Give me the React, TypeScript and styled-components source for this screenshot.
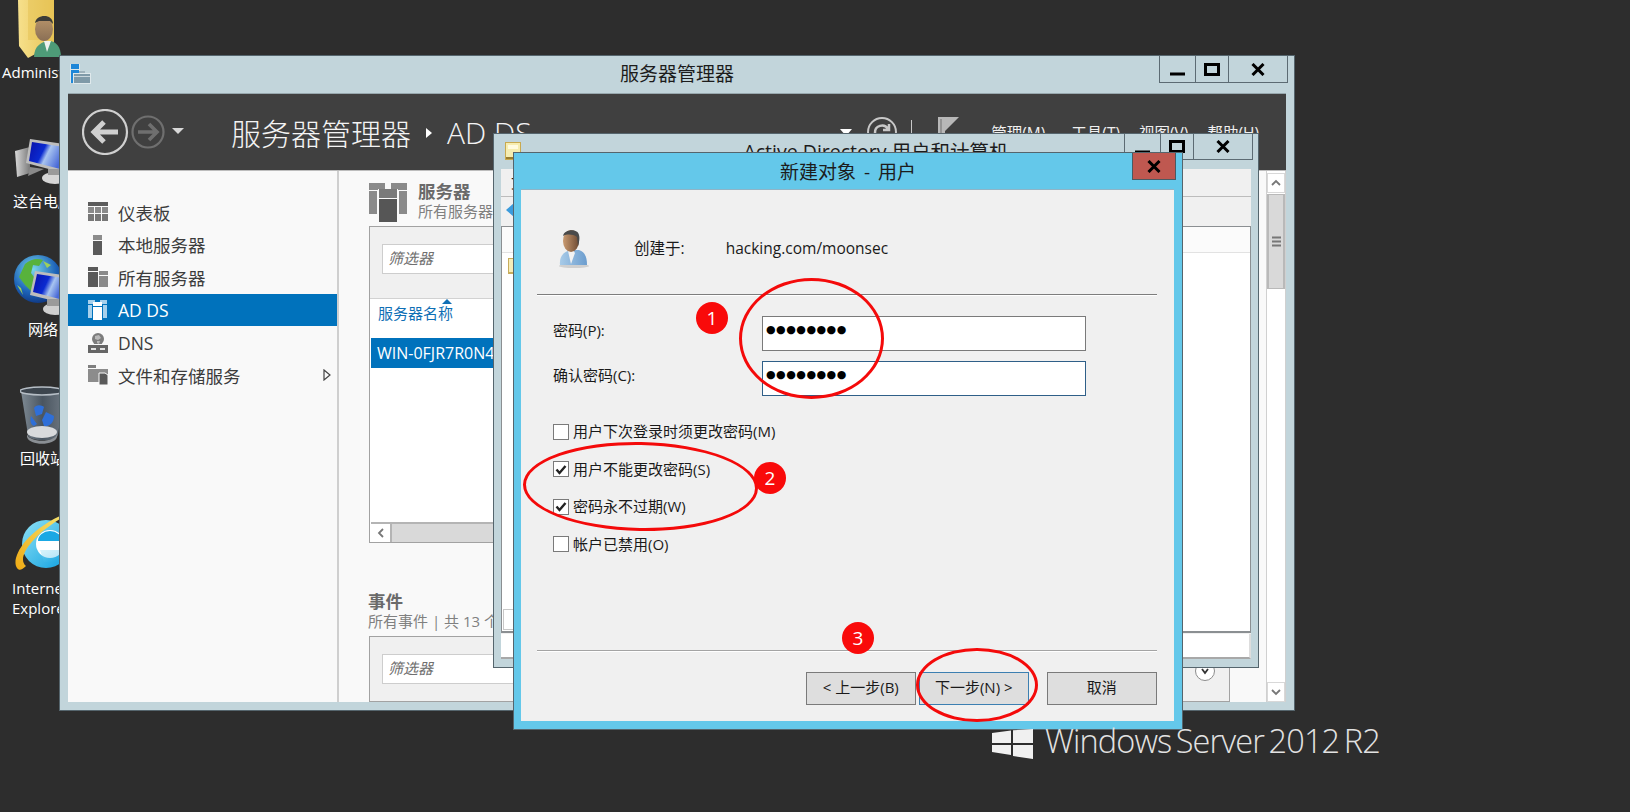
import React from "react";
import styled, { createGlobalStyle } from "styled-components";

const ui = `"Open Sans","Noto Sans CJK SC",sans-serif`;

const Global = createGlobalStyle`
  html, body { margin: 0; padding: 0; background: #2d2d2d; overflow: hidden; }
  * { box-sizing: border-box; }
`;

const Desktop = styled.div`
  position: relative; width: 1630px; height: 812px; background: #2d2d2d; overflow: hidden; font-family: ${ui};
`;

/* desktop icons */
const DesktopItem = styled.div<{ $x: number; $y: number }>`
  position: absolute; left: ${p => p.$x}px; top: ${p => p.$y}px;
`;
const DeskLabel = styled.div<{ $x: number; $y: number }>`
  position: absolute; left: ${p => p.$x}px; top: ${p => p.$y}px;
  color: #fff; font-size: 15px; line-height: 20px; white-space: nowrap;
`;

/* windows */
const Window = styled.div<{ $x: number; $y: number; $w: number; $h: number; $bg: string }>`
  position: absolute; left: ${p => p.$x}px; top: ${p => p.$y}px; width: ${p => p.$w}px; height: ${p => p.$h}px;
  background: ${p => p.$bg}; border: 1px solid #55656d; display: flex; flex-direction: column;
`;
const TitleBar = styled.div<{ $h: number }>`
  height: ${p => p.$h}px; flex: none; display: grid; grid-template-columns: 1fr auto 1fr; align-items: start;
`;
const TitleIcon = styled.div<{ $top: number; $left: number }>`
  margin-top: ${p => p.$top}px; margin-left: ${p => p.$left}px; line-height: 0;
`;
const TitleText = styled.div<{ $size: number; $up: number }>`
  align-self: center; font-size: ${p => p.$size}px; color: #1c1c1c; white-space: nowrap; margin-top: ${p => -p.$up}px;
`;
const Controls = styled.div<{ $right: number }>`
  justify-self: end; display: flex; margin-right: ${p => p.$right}px;
`;
const Ctl = styled.div<{ $w: number; $h: number }>`
  width: ${p => p.$w}px; height: ${p => p.$h}px; border: 1px solid #5c6b73; border-top: 0; margin-left: -1px;
  display: flex; align-items: center; justify-content: center;
`;
const MinGlyph = styled.span`
  margin-top: 8px; line-height: 0;
`;
const CloseBtn = styled.div`
  width: 44px; height: 27px; margin-right: 6px; justify-self: end; background: #bf5850; border: 1px solid #4a5a62; border-top: 0;
  display: flex; align-items: center; justify-content: center;
`;

/* server manager */
const Header = styled.div`
  flex: none; height: 78px; margin: 0 8px; background: #404040; border-top: 1px solid #98a8ae; border-bottom: 1px solid #bdbdbd;
  display: flex; align-items: center; padding-left: 14px; padding-right: 27px; color: #fff;
`;
const Crumb = styled.div`
  display: flex; align-items: center; margin-left: 47px; font-size: 30px; font-weight: 300; color: #f4f4f4; white-space: nowrap;
`;
const CrumbArrow = styled.span`
  width: 0; height: 0; border-left: 6px solid #fff; border-top: 5px solid transparent; border-bottom: 5px solid transparent; margin: 2px 15px 0 15px;
`;
const Tools = styled.div`
  margin-left: auto; display: flex; align-items: center;
`;
const MenuLabel = styled.div<{ $m: number }>`
  font-size: 15.5px; color: #f0f0f0; margin-left: ${p => p.$m}px; white-space: nowrap;
`;
const DropTri = styled.span`
  width: 0; height: 0; border-top: 7px solid #fff; border-left: 6px solid transparent; border-right: 6px solid transparent; margin-right: 15px;
`;
const Body = styled.div`
  flex: 1; min-height: 0; margin: 0 8px 8px; display: flex; background: #f9f9f9;
`;
const Sidebar = styled.nav`
  flex: none; width: 271px; border-right: 2px solid #cfcfcf; padding-top: 25px;
`;
const NavRow = styled.div<{ $active?: boolean }>`
  height: 32.6px; display: flex; align-items: center; padding-left: 20px; gap: 10px;
  font-size: 17.5px; color: ${p => (p.$active ? "#fff" : "#3c3c3c")}; background: ${p => (p.$active ? "#0072bc" : "transparent")};
`;
const NavArrow = styled.span`
  margin-left: auto; margin-right: 6px; line-height: 0;
`;
const Content = styled.main`
  flex: 1; min-width: 0; padding: 12px 36px 0 30px; display: flex; flex-direction: column; overflow: hidden;
`;
const SecHead = styled.div`
  display: flex; gap: 11px; height: 43px; flex: none;
`;
const SecText = styled.div`
  margin-top: -2px;
`;
const SecTitle = styled.div`
  font-size: 17.5px; font-weight: 700; line-height: 20px; color: #6a6a6a; white-space: nowrap;
`;
const SecSub = styled.div`
  font-size: 15px; line-height: 20px; color: #808080; white-space: nowrap;
`;
const Panel = styled.section<{ $h?: number }>`
  flex: ${p => (p.$h ? "none" : 1)}; height: ${p => (p.$h ? `${p.$h}px` : "auto")}; min-height: 0; background: #fff; border: 1px solid #a2a2a2;
  display: flex; flex-direction: column; overflow: hidden;
`;
const PanelBar = styled.div`
  flex: none; height: 72px; background: #f0f0f0; padding: 17px 14px 0 12px; display: flex; justify-content: space-between; border-bottom: 1px solid #d2d2d2;
`;
const Filter = styled.div`
  width: 500px; height: 30px; background: #fff; border: 1px solid #cdcdcd; padding-left: 5px; line-height: 26px;
  font-family: "Noto Sans CJK SC", sans-serif; font-size: 15px; font-style: oblique 14deg; color: #6f6f6f;
`;
const RoundBtn = styled.div`
  width: 20px; height: 20px; margin-top: 7px; border-radius: 50%; border: 1px solid #8c8c8c; background: #fff; line-height: 0;
  display: flex; align-items: center; justify-content: center;
`;
const ColHead = styled.div`
  flex: none; height: 39px; padding: 0 8px; position: relative; font-size: 15px; line-height: 29px; color: #0f6fb5;
`;
const SortCaret = styled.span`
  position: absolute; left: 72px; top: 0; width: 0; height: 0; border-bottom: 5px solid #0f6fb5; border-left: 5px solid transparent; border-right: 5px solid transparent;
`;
const ListRow = styled.div`
  flex: none; height: 30px; margin-left: 1px; padding-left: 6px; background: #0072bc; color: #fff; font-size: 16px; line-height: 30px; white-space: nowrap;
`;
const Grow = styled.div`
  flex: 1; min-height: 0;
`;
const HScroll = styled.div`
  flex: none; height: 20px; margin-left: 1px; background: #d9d9d9; border-top: 2px solid #b4b4b4; display: flex;
`;
const HScrollBtn = styled.div`
  width: 21px; background: #fff; border-right: 2px solid #b4b4b4; display: flex; align-items: center; justify-content: center; line-height: 0;
`;
const EventsHead = styled.div`
  flex: none; margin: 48px 0 2px -1px; height: 43px;
`;
const VScroll = styled.div`
  flex: none; width: 20px; background: #fff; border-left: 1px solid #d0d0d0; border-right: 1px solid #d0d0d0; padding-top: 2px; display: flex; flex-direction: column;
`;
const VBtn = styled.div`
  flex: none; height: 20px; display: flex; align-items: center; justify-content: center; line-height: 0; border: 1px solid #d8d8d8;
`;
const VThumb = styled.div`
  flex: none; height: 95px; margin-top: 1px; background: #d9d9d9; border: 2px solid #b9b9b9; border-width: 1px 2px; display: flex; align-items: center; justify-content: center; line-height: 0;
`;

/* AD window */
const AdBody = styled.div`
  flex: 1; min-height: 0; margin: 0 7px 8px; display: flex; flex-direction: column; background: #f0f0f0;
`;
const AdMenu = styled.div`
  flex: none; height: 28px; border-bottom: 1px solid #bcbcbc; padding-left: 10px; font-size: 15px; line-height: 26px; color: #222;
`;
const AdTools = styled.div`
  flex: none; height: 29px; padding: 6px 0 0 5px; line-height: 0;
`;
const AdList = styled.div`
  flex: 1; min-height: 0; background: #fff; border: 1px solid #8b8f92; border-bottom-width: 2px; display: flex; flex-direction: column;
`;
const AdListHead = styled.div`
  flex: none; height: 26px; background: #fbfbfb; border-bottom: 1px solid #e2e2e2;
`;
const AdListRow = styled.div`
  flex: none; height: 22px; padding: 5px 0 0 6px; line-height: 0;
`;
const AdHScroll = styled.div`
  flex: none; height: 22px; padding-left: 1px; background: #fff; display: flex;
`;
const AdHBtn = styled.div`
  width: 20px; height: 21px; border: 1px solid #c8c8c8; background: #fff;
`;
const AdStatus = styled.div`
  flex: none; height: 25px; background: #fff; border-right: 2px solid #ddd; border-bottom: 2px solid #a8a8a8; margin-top: 1px;
`;

/* dialog */
const DialogTitle = styled(TitleText)`
  word-spacing: 3px;
`;
const DialogInner = styled.div`
  flex: 1; min-height: 0; margin: 0 8px 8px 7px; background: #f0f0f0; border-top: 1px solid #8fb4c6; display: flex; flex-direction: column; padding: 0 17px 0 16px;
  color: #1a1a1a; font-size: 15px;
`;
const CreatorRow = styled.div`
  flex: none; height: 104px; display: grid; grid-template-columns: 75px 91.7px 1fr; align-items: center; padding-left: 22px; padding-top: 13px;
`;
const CreatorIcon = styled.div`
  line-height: 0;
`;
const CreatorText = styled.span`
  font-size: 15.5px; margin-bottom: 2px;
`;
const Rule = styled.div<{ $c: string }>`
  flex: none; height: 2px; background: ${p => p.$c}; border-bottom: 1px solid #fff;
`;
const Form = styled.div`
  margin-top: 20px; padding-left: 16px; display: flex; flex-direction: column; gap: 10.5px;
`;
const FormRow = styled.div`
  display: grid; grid-template-columns: 209px 324px; align-items: center;
`;
const FormLabel = styled.span`
  padding-bottom: 7px;
`;
const PwdBox = styled.div<{ $focus?: boolean }>`
  height: 34.5px; background: #fff; border: 1px solid ${p => (p.$focus ? "#2f5f88" : "#7a7a7a")}; padding-left: 3px;
  font-family: "DejaVu Sans", sans-serif; font-size: 11px; letter-spacing: 0.5px; line-height: 26px; color: #000; white-space: nowrap;
`;
const Checks = styled.div`
  margin-top: 28px; padding-left: 16px; display: flex; flex-direction: column; gap: 21.6px;
`;
const CheckRow = styled.label`
  display: flex; align-items: center; gap: 4px; height: 16px; white-space: nowrap;
`;
const CheckText = styled.span`
  margin-bottom: 2px;
`;
const Box = styled.span`
  width: 16px; height: 16px; flex: none; background: #fff; border: 1px solid #7a7a7a; line-height: 0; display: flex; align-items: center; justify-content: center;
`;
const Footer = styled.div`
  flex: none; display: flex; justify-content: flex-end; padding: 20px 0 16px;
`;
const Btn = styled.div<{ $focus?: boolean; $ml: number }>`
  width: 110.5px; height: 33px; margin-left: ${p => p.$ml}px; background: #dedede; border: 1px solid ${p => (p.$focus ? "#3c7fb1" : "#7a7a7a")};
  text-align: center; line-height: 29px; color: #1a1a1a; white-space: nowrap;
`;

/* annotations */
const Ring = styled.div<{ $x: number; $y: number; $w: number; $h: number; $r?: number }>`
  position: absolute; left: ${p => p.$x}px; top: ${p => p.$y}px; width: ${p => p.$w}px; height: ${p => p.$h}px;
  border: 3px solid #f40a0a; border-radius: 50%; transform: rotate(${p => p.$r ?? 0}deg);
`;
const Badge = styled.div<{ $x: number; $y: number }>`
  position: absolute; left: ${p => p.$x - 16}px; top: ${p => p.$y - 16}px; width: 32px; height: 32px; border-radius: 50%; background: #f90a0a;
  color: #fff; font-size: 19px; line-height: 32px; text-align: center;
`;

/* brand */
const Brand = styled.div`
  position: absolute; left: 992px; top: 720px; display: flex; align-items: flex-start; gap: 12px;
`;
const BrandLogo = styled.div`
  margin-top: 9px; line-height: 0;
`;
const BrandText = styled.div`
  font-size: 32.5px; font-weight: 300; line-height: 42px; color: #e2e2e2; white-space: nowrap; letter-spacing: -0.9px; word-spacing: -3px;
`;

/* icons */
const Min = () => <MinGlyph><svg width="16" height="4"><rect width="15" height="3" y="0.5" fill="#000" /></svg></MinGlyph>;
const Max = () => <svg width="16" height="13"><rect x="1.5" y="1.5" width="13" height="10" fill="none" stroke="#000" strokeWidth="3" /></svg>;
const XIcon = () => <svg width="14" height="13"><path d="M1.5 1 L12.5 12 M12.5 1 L1.5 12" stroke="#000" strokeWidth="3" fill="none" /></svg>;

const ServerMgrIcon = () => (
  <svg width="21" height="20" viewBox="0 0 21 20">
    <rect x="0" y="0" width="10" height="19" fill="#fff" opacity=".45" />
    <rect x="1" y="0" width="8" height="5" fill="#1e87d8" />
    <rect x="1" y="6" width="8" height="13" fill="#1e87d8" />
    <rect x="3" y="9" width="18" height="11" fill="#dfe9ec" />
    <rect x="4" y="10" width="16" height="9" fill="#7f9aa8" />
    <rect x="4" y="12" width="16" height="1" fill="#c9d6dc" />
    <rect x="9" y="7" width="6" height="2" fill="#9fb2bb" />
  </svg>
);
const AdIcon = () => (
  <svg width="16" height="18" viewBox="0 0 16 18">
    <rect width="16" height="18" fill="#c9a94f" />
    <rect x="1" y="1" width="14" height="14" fill="#f6edb0" />
    <rect x="3" y="3" width="10" height="4" fill="#fffbe0" />
    <rect x="1" y="15" width="14" height="2" fill="#9a7d2f" />
  </svg>
);
const FolderUser = () => (
  <svg width="44" height="58" viewBox="0 0 44 58">
    <defs>
      <linearGradient id="fy" x1="0" x2="1"><stop offset="0" stopColor="#f6e08c" /><stop offset="1" stopColor="#e9c455" /></linearGradient>
      <linearGradient id="fs" x1="0" x2="0" y1="0" y2="1"><stop offset="0" stopColor="#b8946a" /><stop offset="1" stopColor="#8a6f55" /></linearGradient>
    </defs>
    <path d="M0 0 H36 V44 L10 58 L1 46 Z" fill="url(#fy)" />
    <path d="M10 0 H36 V40 H10 Z" fill="#e6c256" opacity=".55" />
    <ellipse cx="26" cy="29" rx="9" ry="12" fill="url(#fs)" />
    <path d="M17 23 C18 14 35 13 35 24 L32 21 H21 Z" fill="#3c3c38" />
    <path d="M16 57 C16 46 24 41 31 41 C38 41 43 47 43 57 Z" fill="#4e9b78" />
    <path d="M26 41 L29 52 L33 41 Z" fill="#eef2ee" />
  </svg>
);
const Computer = () => (
  <svg width="50" height="46" viewBox="0 0 50 46">
    <defs>
      <linearGradient id="cs" x1="0" x2="1" y1="0" y2="0.4"><stop offset="0" stopColor="#0a10a8" /><stop offset=".45" stopColor="#0a2ad0" /><stop offset=".6" stopColor="#a8c4f0" /><stop offset="1" stopColor="#4a6ad8" /></linearGradient>
      <linearGradient id="ct" x1="0" x2="1"><stop offset="0" stopColor="#d8d8d8" /><stop offset="1" stopColor="#7a7a7a" /></linearGradient>
    </defs>
    <path d="M1 12 L16 8 L16 34 L3 38 Z" fill="url(#ct)" />
    <path d="M16 28 L30 30 L14 37 Z" fill="#8a8a8a" />
    <path d="M16 0 L50 5 V34 L12 24 Z" fill="#bdbdbd" />
    <path d="M18 3 L50 8 V31 L15 22 Z" fill="url(#cs)" />
    <ellipse cx="41" cy="39" rx="13" ry="6" fill="#d6d6d6" />
    <rect x="34" y="30" width="12" height="6" fill="#9a9a9a" />
  </svg>
);
const Network = () => (
  <svg width="50" height="62" viewBox="0 0 50 62">
    <defs>
      <radialGradient id="ng" cx=".4" cy=".3" r=".8"><stop offset="0" stopColor="#7ad6ea" /><stop offset=".6" stopColor="#1c62b8" /><stop offset="1" stopColor="#0c2a70" /></radialGradient>
      <linearGradient id="ns" x1="0" x2="1" y1="0" y2="0.4"><stop offset="0" stopColor="#0a10a8" /><stop offset=".5" stopColor="#0a2ad0" /><stop offset=".7" stopColor="#a8c4f0" /><stop offset="1" stopColor="#4a6ad8" /></linearGradient>
    </defs>
    <circle cx="25" cy="24" r="24" fill="url(#ng)" />
    <path d="M12 9 C18 4 24 3 30 5 L26 11 L20 10 L18 18 L24 26 L20 38 L12 30 L6 22 Z" fill="#58b23c" />
    <path d="M30 6 L38 10 L34 13 Z M4 30 L10 40 L8 33 Z" fill="#9ccf5c" />
    <path d="M22 16 L50 20 V48 L17 40 Z" fill="#bdbdbd" />
    <path d="M24 19 L50 23 V45 L20 37 Z" fill="url(#ns)" />
    <ellipse cx="42" cy="54" rx="12" ry="6" fill="#cfcfcf" />
    <rect x="34" y="44" width="12" height="7" fill="#9a9a9a" />
  </svg>
);
const Recycle = () => (
  <svg width="44" height="58" viewBox="0 0 44 58">
    <defs>
      <linearGradient id="rb" x1="0" x2="1"><stop offset="0" stopColor="#7e8a94" /><stop offset=".5" stopColor="#4a5560" /><stop offset="1" stopColor="#6e7882" /></linearGradient>
    </defs>
    <path d="M1 5 L8 49 C10 56 36 56 38 49 L44 5 Z" fill="url(#rb)" />
    <ellipse cx="22" cy="5" rx="22" ry="4" fill="#3c454e" stroke="#b6bec6" strokeWidth="1.5" />
    <path d="M14 22 C16 18 22 19 24 21 L22 28 L16 30 Z M26 26 L34 30 C34 38 28 41 24 40 L22 34 Z M11 30 L17 38 L14 40 C10 38 10 34 11 30 Z" fill="#2f6fd8" />
    <ellipse cx="22" cy="46" rx="15" ry="6" fill="#d8dadc" />
    <path d="M7 48 C9 57 35 57 37 48 L37 51 C35 60 9 60 7 51 Z" fill="#8a8f94" />
  </svg>
);
const IE = () => (
  <svg width="60" height="56" viewBox="0 0 60 56">
    <defs>
      <linearGradient id="ieb" x1="0" x2="1" y1="0" y2="1"><stop offset="0" stopColor="#8fe2f5" /><stop offset="1" stopColor="#0d9fe0" /></linearGradient>
      <linearGradient id="ieo" x1="0" x2="1" y1="1" y2="0"><stop offset="0" stopColor="#f0ab14" /><stop offset="1" stopColor="#f5e06a" /></linearGradient>
    </defs>
    <circle cx="32" cy="28" r="24" fill="url(#ieb)" />
    <circle cx="36" cy="28" r="14" fill="#fff" />
    <path d="M24 25 A12 10 0 0 1 48 25 Z" fill="#1aa8e4" />
    <path d="M26 34 H52 V46 H30 Z" fill="url(#ieb)" opacity=".35" />
    <path d="M3 52 C-3 44 8 18 46 0 L46 3 C18 20 2 42 12 50 C8 54 5 55 3 52 Z" fill="url(#ieo)" />
  </svg>
);
const NavDash = () => (
  <svg width="20" height="20" viewBox="0 0 20 20" fill="#8a8a8a">
    <rect width="20" height="4" fill="#5c5c5c" />
    <rect y="5" width="6" height="6" /><rect x="7" y="5" width="6" height="6" /><rect x="14" y="5" width="6" height="6" />
    <rect y="12" width="6" height="7" fill="#777" /><rect x="7" y="12" width="6" height="7" fill="#777" /><rect x="14" y="12" width="6" height="7" fill="#777" />
  </svg>
);
const NavLocal = () => (
  <svg width="20" height="20" viewBox="0 0 20 20">
    <rect x="5" y="0" width="9" height="5" fill="#8c8c8c" />
    <rect x="5" y="6" width="9" height="14" fill="#5a5a5a" />
  </svg>
);
const NavAll = () => (
  <svg width="20" height="20" viewBox="0 0 20 20">
    <rect x="0" y="0" width="10" height="4" fill="#5a5a5a" />
    <rect x="0" y="5" width="10" height="15" fill="#5a5a5a" />
    <rect x="11" y="4" width="9" height="4" fill="#8a8a8a" />
    <rect x="11" y="9" width="9" height="11" fill="#8a8a8a" />
  </svg>
);
const NavAd = () => (
  <svg width="20" height="20" viewBox="0 0 20 20">
    <rect x="0" y="0" width="7" height="4" fill="#a6d0ec" /><rect x="12" y="0" width="7" height="4" fill="#a6d0ec" />
    <rect x="0" y="5" width="4" height="13" fill="#a6d0ec" /><rect x="15" y="5" width="4" height="13" fill="#a6d0ec" />
    <rect x="5" y="2" width="9" height="4" fill="#fff" />
    <rect x="5" y="7" width="9" height="13" fill="#fff" />
  </svg>
);
const NavDns = () => (
  <svg width="20" height="20" viewBox="0 0 20 20">
    <circle cx="10" cy="6" r="6" fill="#7c7c7c" />
    <path d="M7 3 L11 2 L13 5 L10 7 L7 6 Z M9 8 L12 8 L11 11 L9 10 Z" fill="#b8b8b8" />
    <rect x="0" y="12" width="20" height="8" fill="#666" />
    <rect x="3" y="15" width="5" height="2" fill="#e2e2e2" /><rect x="12" y="15" width="5" height="2" fill="#e2e2e2" />
    <rect x="0" y="11" width="20" height="1" fill="#f9f9f9" />
  </svg>
);
const NavFiles = () => (
  <svg width="20" height="20" viewBox="0 0 20 20">
    <rect x="0" y="0" width="8" height="3" fill="#7f7f7f" />
    <rect x="0" y="4" width="20" height="13" fill="#8c8c8c" />
    <path d="M11 8 H17 L20 10 V20 H11 Z" fill="#5a5a5a" stroke="#f9f9f9" strokeWidth="1" />
  </svg>
);
const SecIcon = () => (
  <svg width="38" height="39" viewBox="0 0 38 39">
    <rect x="0" y="0" width="16" height="7" fill="#8a8a8a" /><rect x="22" y="0" width="16" height="7" fill="#8a8a8a" />
    <rect x="0" y="8" width="8" height="23" fill="#8a8a8a" /><rect x="30" y="8" width="8" height="23" fill="#8a8a8a" />
    <rect x="9" y="6" width="20" height="33" fill="#f9f9f9" />
    <rect x="10" y="6" width="18" height="9" fill="#7a7a7a" />
    <rect x="10" y="16" width="18" height="23" fill="#565656" />
  </svg>
);
const UserIcon = () => (
  <svg width="30" height="39" viewBox="0 0 30 39">
    <defs>
      <linearGradient id="uf" x1="0" x2="1"><stop offset="0" stopColor="#c99a70" /><stop offset="1" stopColor="#6e4a32" /></linearGradient>
      <linearGradient id="ub" x1="0" x2="1"><stop offset="0" stopColor="#a8cbe8" /><stop offset="1" stopColor="#6c9dce" /></linearGradient>
    </defs>
    <ellipse cx="15" cy="37" rx="15" ry="2" fill="#cfcfcf" />
    <path d="M1 36 C0 26 6 22 13 21 L20 21 C26 23 28 28 28 36 Z" fill="url(#ub)" />
    <path d="M9 22 L12 35 L16 24 L14 21 Z" fill="#f2f2f2" />
    <ellipse cx="12" cy="12" rx="8" ry="11" fill="url(#uf)" />
    <path d="M4 7 C5 0 19 -1 20 6 C21 9 20 14 19 17 L18 8 C14 5 8 5 4 7 Z" fill="#4a4a4a" />
  </svg>
);
const Check = () => (
  <svg width="12" height="11" viewBox="0 0 12 11"><path d="M1.5 5.5 L4.5 9 L10.5 2" fill="none" stroke="#222" strokeWidth="2.4" /></svg>
);
const Chevron = ({ d, c = "#777" }: { d: string; c?: string }) => (
  <svg width="10" height="10" viewBox="0 0 10 10"><path d={d} fill="none" stroke={c} strokeWidth="1.8" /></svg>
);
const BackNav = () => (
  <svg width="102" height="46" viewBox="0 0 102 46">
    <circle cx="23" cy="23" r="22" fill="none" stroke="#d0d0d0" strokeWidth="2.2" />
    <path d="M36 23 H13 M22 13 L12 23 L22 33" fill="none" stroke="#d0d0d0" strokeWidth="5" />
    <circle cx="66" cy="23" r="15.5" fill="none" stroke="#6f6f6f" strokeWidth="2.2" />
    <path d="M56 23 H74 M67 15 L75 23 L67 31" fill="none" stroke="#6f6f6f" strokeWidth="3.6" />
    <path d="M90 19 H102 L96 25 Z" fill="#d8d8d8" />
  </svg>
);
const Refresh = () => (
  <svg width="30" height="30" viewBox="0 0 30 30">
    <circle cx="15" cy="15" r="14" fill="none" stroke="#c8c8c8" strokeWidth="2" />
    <path d="M8 16 A7 7 0 0 1 21 12 M22 7 V13 H16" fill="none" stroke="#c8c8c8" strokeWidth="2.5" />
  </svg>
);
const Flag = () => (
  <svg width="22" height="30" viewBox="0 0 22 30">
    <path d="M0 0 H21 L7 14 V18 H3 V30 H0 Z" fill="#b8b8b8" />
    <path d="M3 2 V16" stroke="#404040" strokeWidth=".6" />
  </svg>
);
const SepLine = styled.span`
  width: 1px; height: 24px; background: #c8c8c8; margin: 0 26px 0 14px;
`;
const WinLogo = () => (
  <svg width="41" height="30" viewBox="0 0 41 30">
    <path d="M0 4 L19 1.5 V14 H0 Z M21 1.2 L41 0 V14 H21 Z M0 16 H19 V26 L0 23 Z M21 16 H41 V30 L21 27 Z" fill="#f0f0f0" />
  </svg>
);
const BlueArrow = () => (
  <svg width="10" height="14" viewBox="0 0 10 14"><path d="M8 0 L0 7 L8 14 Z" fill="#3a9bdc" /></svg>
);
const TreeFolder = () => (
  <svg width="16" height="16" viewBox="0 0 16 16"><rect width="16" height="16" fill="#c8ad5c" /><rect x="1" y="1" width="14" height="13" fill="#f6edb8" /></svg>
);

const navItems: [string, React.ReactNode, boolean?, boolean?][] = [
  ["仪表板", <NavDash />],
  ["本地服务器", <NavLocal />],
  ["所有服务器", <NavAll />],
  ["AD DS", <NavAd />, true],
  ["DNS", <NavDns />],
  ["文件和存储服务", <NavFiles />, false, true],
];

export default function App() {
  return (
    <>
      <Global />
      <Desktop>
        <DesktopItem $x={18} $y={0}><FolderUser /></DesktopItem>
        <DeskLabel $x={2} $y={62}>Administrator</DeskLabel>
        <DesktopItem $x={14} $y={139}><Computer /></DesktopItem>
        <DeskLabel $x={13} $y={191}>这台电脑</DeskLabel>
        <DesktopItem $x={13} $y={255}><Network /></DesktopItem>
        <DeskLabel $x={28} $y={319}>网络</DeskLabel>
        <DesktopItem $x={20} $y={386}><Recycle /></DesktopItem>
        <DeskLabel $x={20} $y={448}>回收站</DeskLabel>
        <DesktopItem $x={14} $y={516}><IE /></DesktopItem>
        <DeskLabel $x={12} $y={578}>Internet<br />Explorer</DeskLabel>

        <Window $x={59} $y={55} $w={1236} $h={656} $bg="#c2d5db">
          <TitleBar $h={37}>
            <TitleIcon $top={8} $left={10}><ServerMgrIcon /></TitleIcon>
            <TitleText $size={19} $up={4}>服务器管理器</TitleText>
            <Controls $right={6}>
              <Ctl $w={37} $h={27}><Min /></Ctl>
              <Ctl $w={34} $h={27}><Max /></Ctl>
              <Ctl $w={60} $h={27}><XIcon /></Ctl>
            </Controls>
          </TitleBar>
          <Header>
            <BackNav />
            <Crumb>服务器管理器<CrumbArrow />AD DS</Crumb>
            <Tools>
              <DropTri />
              <Refresh />
              <SepLine />
              <Flag />
              <MenuLabel $m={31}>管理(M)</MenuLabel>
              <MenuLabel $m={26}>工具(T)</MenuLabel>
              <MenuLabel $m={19}>视图(V)</MenuLabel>
              <MenuLabel $m={19}>帮助(H)</MenuLabel>
            </Tools>
          </Header>
          <Body>
            <Sidebar>
              {navItems.map(([label, icon, active, more]) => (
                <NavRow key={label} $active={active}>
                  {icon}
                  {label}
                  {more && (
                    <NavArrow>
                      <svg width="8" height="12" viewBox="0 0 8 12"><path d="M1 1 L7 6 L1 11 Z" fill="none" stroke="#444" strokeWidth="1.2" /></svg>
                    </NavArrow>
                  )}
                </NavRow>
              ))}
            </Sidebar>
            <Content>
              <SecHead>
                <SecIcon />
                <SecText>
                  <SecTitle>服务器</SecTitle>
                  <SecSub>所有服务器 | 共 1 个</SecSub>
                </SecText>
              </SecHead>
              <Panel $h={317}>
                <PanelBar><Filter>筛选器</Filter></PanelBar>
                <ColHead>服务器名称<SortCaret /></ColHead>
                <ListRow>WIN-0FJR7R0N4QE</ListRow>
                <Grow />
                <HScroll>
                  <HScrollBtn><Chevron d="M7 1 L3 5 L7 9" /></HScrollBtn>
                </HScroll>
              </Panel>
              <EventsHead>
                <SecTitle>事件</SecTitle>
                <SecSub>所有事件 | 共 13 个</SecSub>
              </EventsHead>
              <Panel>
                <PanelBar>
                  <Filter>筛选器</Filter>
                  <RoundBtn><Chevron d="M2 3 L5 7 L8 3" c="#333" /></RoundBtn>
                </PanelBar>
              </Panel>
            </Content>
            <VScroll>
              <VBtn><Chevron d="M1 7 L5 3 L9 7" /></VBtn>
              <VThumb>
                <svg width="9" height="11" viewBox="0 0 9 11"><path d="M0 1.5 H9 M0 5.5 H9 M0 9.5 H9" stroke="#777" strokeWidth="2" /></svg>
              </VThumb>
              <Grow />
              <VBtn><Chevron d="M1 3 L5 7 L9 3" /></VBtn>
            </VScroll>
          </Body>
        </Window>

        <Window $x={493} $y={133} $w={766} $h={535} $bg="#c2d5db">
          <TitleBar $h={35}>
            <TitleIcon $top={8} $left={11}><AdIcon /></TitleIcon>
            <TitleText $size={19.5} $up={2}>Active Directory 用户和计算机</TitleText>
            <Controls $right={5}>
              <Ctl $w={37} $h={26}><Min /></Ctl>
              <Ctl $w={34} $h={26}><Max /></Ctl>
              <Ctl $w={60} $h={26}><XIcon /></Ctl>
            </Controls>
          </TitleBar>
          <AdBody>
            <AdMenu>文件(F)</AdMenu>
            <AdTools><BlueArrow /></AdTools>
            <AdList>
              <AdListHead />
              <AdListRow><TreeFolder /></AdListRow>
              <Grow />
              <AdHScroll><AdHBtn /></AdHScroll>
            </AdList>
            <AdStatus />
          </AdBody>
        </Window>

        <Window $x={513} $y={152} $w={670} $h={578} $bg="#64c8ea">
          <TitleBar $h={36}>
            <span />
            <DialogTitle $size={19} $up={1}>新建对象 - 用户</DialogTitle>
            <CloseBtn><XIcon /></CloseBtn>
          </TitleBar>
          <DialogInner>
            <CreatorRow>
              <CreatorIcon><UserIcon /></CreatorIcon>
              <CreatorText>创建于:</CreatorText>
              <CreatorText>hacking.com/moonsec</CreatorText>
            </CreatorRow>
            <Rule $c="#7d7d7d" />
            <Form>
              <FormRow><FormLabel>密码(P):</FormLabel><PwdBox>●●●●●●●●</PwdBox></FormRow>
              <FormRow><FormLabel>确认密码(C):</FormLabel><PwdBox $focus>●●●●●●●●</PwdBox></FormRow>
            </Form>
            <Checks>
              <CheckRow><Box /><CheckText>用户下次登录时须更改密码(M)</CheckText></CheckRow>
              <CheckRow><Box><Check /></Box><CheckText>用户不能更改密码(S)</CheckText></CheckRow>
              <CheckRow><Box><Check /></Box><CheckText>密码永不过期(W)</CheckText></CheckRow>
              <CheckRow><Box /><CheckText>帐户已禁用(O)</CheckText></CheckRow>
            </Checks>
            <Grow />
            <Rule $c="#a4a4a4" />
            <Footer>
              <Btn $ml={0}>&lt; 上一步(B)</Btn>
              <Btn $ml={2.5} $focus>下一步(N) &gt;</Btn>
              <Btn $ml={17.5}>取消</Btn>
            </Footer>
          </DialogInner>
        </Window>

        <Ring $x={739} $y={278} $w={145} $h={121} />
        <Ring $x={523} $y={442} $w={235} $h={89} $r={1} />
        <Ring $x={916} $y={648} $w={122} $h={74} />
        <Badge $x={712} $y={318}>1</Badge>
        <Badge $x={770} $y={478}>2</Badge>
        <Badge $x={858} $y={638}>3</Badge>

        <Brand>
          <BrandLogo><WinLogo /></BrandLogo>
          <BrandText>Windows Server 2012 R2</BrandText>
        </Brand>
      </Desktop>
    </>
  );
}
